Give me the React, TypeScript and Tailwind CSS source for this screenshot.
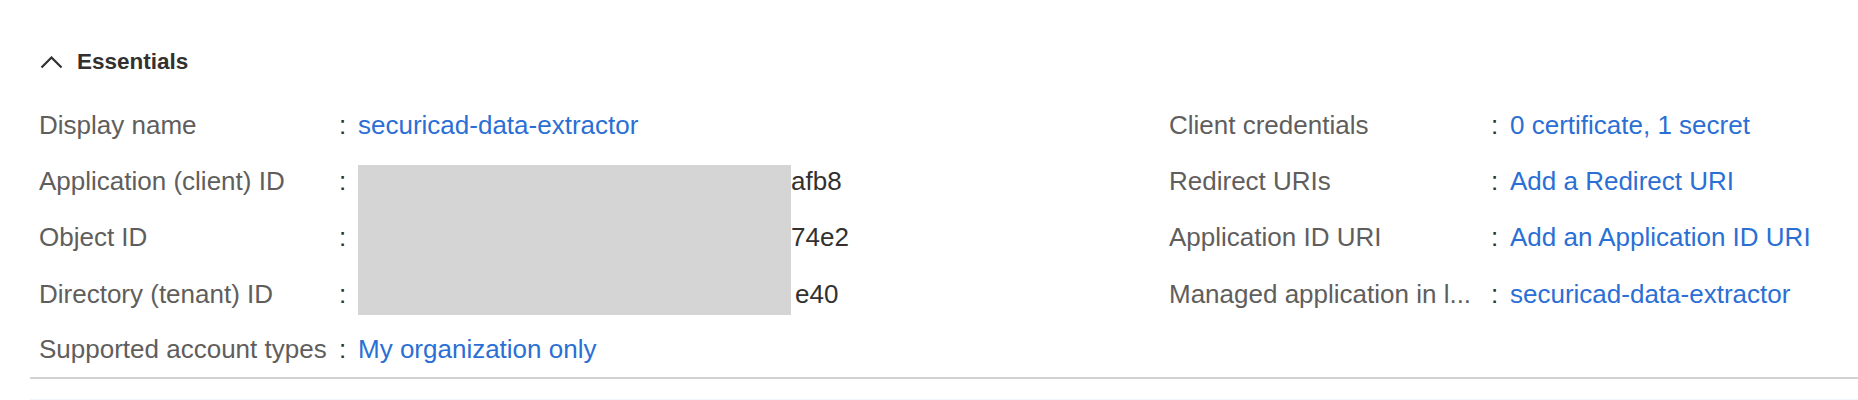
const FONT = { fontFamily: '"Liberation Sans", Arial, sans-serif' }

type Item = { label: string; value: string; link?: boolean }

const right: Item[] = [
  { label: 'Client credentials', value: '0 certificate, 1 secret', link: true },
  { label: 'Redirect URIs', value: 'Add a Redirect URI', link: true },
  { label: 'Application ID URI', value: 'Add an Application ID URI', link: true },
  { label: 'Managed application in l...', value: 'securicad-data-extractor', link: true },
]

function Colon() {
  return <div className="flex items-center text-[#323130]">:</div>
}

function Label({ children }: { children: React.ReactNode }) {
  return <div className="flex items-center text-[#605e5c] whitespace-nowrap">{children}</div>
}

function LinkValue({ children, className = '' }: { children: React.ReactNode; className?: string }) {
  return (
    <div className={`flex items-center ${className}`}>
      <a href="#" className="text-[#2b6fd5] whitespace-nowrap">{children}</a>
    </div>
  )
}

export default function App() {
  return (
    <div className="h-[400px] overflow-hidden bg-white pl-[30px] pt-[42px]" style={FONT}>
      <div className="pl-[10px] h-[40px] flex items-center gap-[14px] text-[#323130]">
        <svg width="23" height="13" viewBox="0 0 23 13" fill="none">
          <polyline points="1.5,11.5 11.5,1.5 21.5,11.5" stroke="#323130" strokeWidth="2.2" />
        </svg>
        <span className="text-[22.5px] font-bold">Essentials</span>
      </div>

      <div className="mt-[15px] flex border-b-2 border-[#d2d2d2] text-[26px]">
        <div className="w-[1139px] pl-[9px] grid grid-cols-[300px_19px_433px_auto] grid-rows-[repeat(4,56.3px)_55px]">
          <Label>Display name</Label>
          <Colon />
          <LinkValue className="col-span-2">securicad-data-extractor</LinkValue>

          <Label>Application (client) ID</Label>
          <Colon />
          <div className="row-span-3 mt-[12px] mb-[7px] bg-[#d5d5d5]" />
          <div className="flex items-center text-[#323130]">afb8</div>

          <Label>Object ID</Label>
          <Colon />
          <div className="flex items-center text-[#323130]">74e2</div>

          <Label>Directory (tenant) ID</Label>
          <Colon />
          <div className="flex items-center pl-[4px] text-[#323130]">e40</div>

          <Label>Supported account types</Label>
          <Colon />
          <LinkValue className="col-span-2">My organization only</LinkValue>
        </div>

        <div className="grid grid-cols-[322px_19px_auto] grid-rows-[repeat(4,56.3px)_55px] content-start">
          {right.map((r) => (
            <div key={r.label} className="contents">
              <Label>{r.label}</Label>
              <Colon />
              <LinkValue>{r.value}</LinkValue>
            </div>
          ))}
        </div>
      </div>

      <div className="mt-[20px] h-[40px] bg-[#f1f6fe]" />
    </div>
  )
}
